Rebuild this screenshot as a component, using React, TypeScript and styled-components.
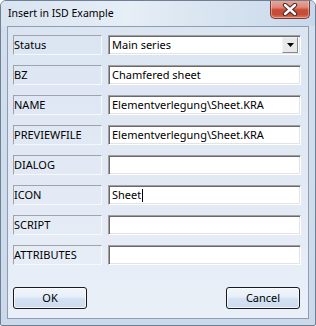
import styled, { createGlobalStyle } from "styled-components";

const GlobalStyle = createGlobalStyle`
  html, body {
    margin: 0;
    padding: 0;
    background: #ffffff;
  }
  body {
    font-family: "Noto Sans", "Open Sans", sans-serif;
    font-size: 11px;
    color: #000;
  }
`;

const fields = [
  { label: "Status", value: "Main series", select: true },
  { label: "BZ", value: "Chamfered sheet" },
  { label: "NAME", value: "Elementverlegung\\Sheet.KRA" },
  { label: "PREVIEWFILE", value: "Elementverlegung\\Sheet.KRA" },
  { label: "DIALOG", value: "" },
  { label: "ICON", value: "Sheet", caret: true },
  { label: "SCRIPT", value: "" },
  { label: "ATTRIBUTES", value: "" },
];

export default function App() {
  return (
    <>
      <GlobalStyle />
      <Window>
        <TitleBar>
          <Title>Insert in ISD Example</Title>
          <CloseButton>
            <svg width="16" height="13" viewBox="0 0 16 13">
              <path
                d="M3 2 L13 11 M13 2 L3 11"
                fill="none"
                stroke="#4e2520"
                strokeWidth="4.4"
                strokeLinecap="round"
              />
              <path
                d="M3 2 L13 11 M13 2 L3 11"
                fill="none"
                stroke="#ffffff"
                strokeWidth="2.4"
                strokeLinecap="round"
              />
            </svg>
          </CloseButton>
        </TitleBar>
        <Client>
          <Form>
            {fields.map((f) => (
              <Row key={f.label}>
                <Label>{f.label}</Label>
                {f.select ? (
                  <Select>
                    <span>{f.value}</span>
                    <DropButton>
                      <svg width="7" height="4" viewBox="0 0 7 4">
                        <path d="M0 0 H7 L3.5 4 Z" fill="#000" />
                      </svg>
                    </DropButton>
                  </Select>
                ) : (
                  <Input>
                    {f.value}
                    {f.caret && <Caret />}
                  </Input>
                )}
              </Row>
            ))}
          </Form>
          <Footer>
            <Button>OK</Button>
            <Button>Cancel</Button>
          </Footer>
        </Client>
      </Window>
    </>
  );
}

const Window = styled.div`
  width: 316px;
  height: 326px;
  box-sizing: border-box;
  border: 1px solid #6f7f94;
  border-radius: 6px 6px 2px 2px;
  background: linear-gradient(to bottom, #dfe8f3 0px, #d3dfee 30px, #cbd9ea 100%);
  display: flex;
  flex-direction: column;
  overflow: hidden;
`;

const TitleBar = styled.div`
  height: 25px;
  display: flex;
  align-items: flex-start;
  justify-content: space-between;
  background: linear-gradient(
    to right,
    #d9e4f1 0%,
    #e6eef6 40%,
    #d7e3f0 70%,
    #c8d8ea 100%
  );
`;

const Title = styled.div`
  padding: 5px 0 0 7px;
  font-size: 10.5px;
  line-height: 14px;
  color: #000;
`;

const CloseButton = styled.div`
  width: 40px;
  height: 19px;
  margin-right: 5px;
  margin-top: -1px;
  box-sizing: border-box;
  border: 1px solid #7a3b35;
  border-top: none;
  border-radius: 0 0 5px 5px;
  background: linear-gradient(
    to bottom,
    #eaa99b 0%,
    #dd8a7a 40%,
    #c94c38 55%,
    #c74c38 80%,
    #da7a62 100%
  );
  display: flex;
  align-items: center;
  justify-content: center;
  box-shadow: inset 0 0 0 1px rgba(255, 220, 210, 0.45);
`;

const Client = styled.div`
  flex: 1;
  margin: 0 6px 6px;
  border: 1px solid #8e9db1;
  background: linear-gradient(to bottom, #dbe5f2 0%, #e3eaf5 60%, #eaf0f8 100%);
  padding: 8px 7px 9px 5px;
  display: flex;
  flex-direction: column;
`;

const Form = styled.div`
  display: flex;
  flex-direction: column;
  gap: 10px;
`;

const Row = styled.div`
  display: grid;
  grid-template-columns: 89px 193px;
  column-gap: 6px;
  height: 20px;
`;

const Label = styled.div`
  box-sizing: border-box;
  height: 20px;
  border: 1px solid;
  border-color: #a0a4aa #f6f9fc #f6f9fc #a0a4aa;
  line-height: 18px;
  white-space: nowrap;
`;

const Input = styled.div`
  box-sizing: border-box;
  height: 20px;
  background: #fff;
  border: 1px solid;
  border-color: #a0a0a0 #ffffff #ffffff #a0a0a0;
  box-shadow: inset 1px 1px 0 #696969, inset -1px -1px 0 #e3e3e3;
  padding-left: 3px;
  line-height: 18px;
  white-space: nowrap;
  display: flex;
  align-items: center;
`;

const Select = styled(Input)`
  justify-content: space-between;
  padding-right: 2px;
`;

const DropButton = styled.div`
  width: 16px;
  height: 16px;
  box-sizing: border-box;
  background: #e9e9e9;
  border: 1px solid;
  border-color: #f4f4f4 #8a8a8a #8a8a8a #f4f4f4;
  display: flex;
  align-items: center;
  justify-content: center;
`;

const Caret = styled.span`
  display: inline-block;
  width: 1px;
  height: 13px;
  background: #000;
  margin-left: 1px;
`;

const Footer = styled.div`
  margin-top: 22px;
  display: flex;
  justify-content: space-between;
  padding-right: 1px;
`;

const Button = styled.button`
  width: 74px;
  height: 22px;
  box-sizing: border-box;
  border: 1px solid #1a1a1a;
  border-radius: 3px;
  background: linear-gradient(
    to bottom,
    #f2f6fb 0%,
    #e6eef8 45%,
    #d3e1f2 55%,
    #cddcf0 100%
  );
  box-shadow: inset 0 0 0 1px rgba(255, 255, 255, 0.7);
  font-family: "Noto Sans", "Open Sans", sans-serif;
  font-size: 11px;
  color: #000;
  padding: 0;
  line-height: 18px;
`;
